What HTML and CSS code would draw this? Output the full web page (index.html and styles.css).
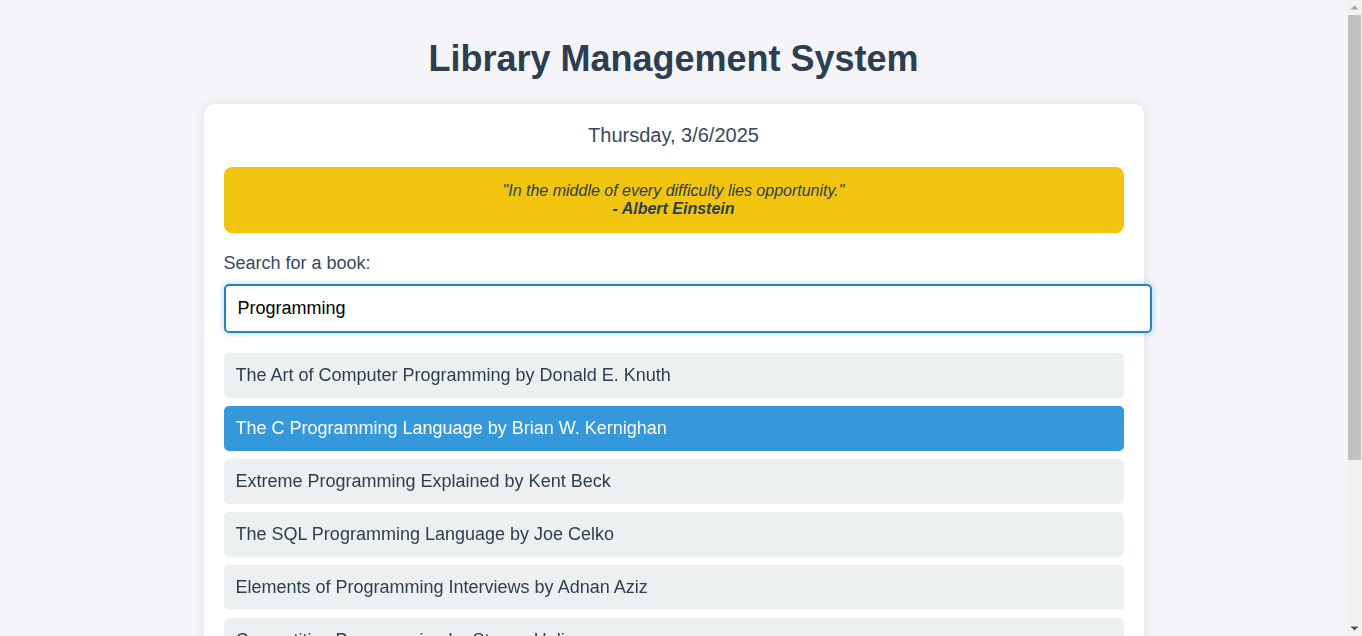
FILE: index.html
```html
<!DOCTYPE html>
<html lang="en">
<head>
<meta charset="utf-8">
<title>Library Management System</title>
<link rel="stylesheet" href="styles.css">
</head>
<body>
<div class="page">
  <h1 class="title">Library Management System</h1>
  <main class="card">
    <div class="date">Thursday, 3/6/2025</div>
    <div class="quote">
      <em>"In the middle of every difficulty lies opportunity."</em><br>
      <strong><em>- Albert Einstein</em></strong>
    </div>
    <label class="label" for="search">Search for a book:</label>
    <div class="search-wrap">
      <input class="search" id="search" type="text" value="Programming" autofocus>
    </div>
    <ul class="results">
      <li class="item">The Art of Computer Programming by Donald E. Knuth</li>
      <li class="item selected">The C Programming Language by Brian W. Kernighan</li>
      <li class="item">Extreme Programming Explained by Kent Beck</li>
      <li class="item">The SQL Programming Language by Joe Celko</li>
      <li class="item">Elements of Programming Interviews by Adnan Aziz</li>
      <li class="item">Competitive Programming by Steven Halim</li>
      <li class="item">Programming Pearls by Jon Bentley</li>
      <li class="item">Python Programming by John Zelle</li>
    </ul>
  </main>
</div>
<div class="scrollbar" aria-hidden="true">
  <div class="sb-btn">
    <svg width="15" height="15" viewBox="0 0 15 15"><polygon points="3.5,9.5 11.5,9.5 7.5,5.5" fill="#a3a3a3"/></svg>
  </div>
  <div class="sb-thumb"></div>
  <div class="sb-track"></div>
  <div class="sb-btn">
    <svg width="15" height="15" viewBox="0 0 15 15"><polygon points="3.5,5.5 11.5,5.5 7.5,9.5" fill="#505050"/></svg>
  </div>
</div>
<script src="script.js"></script>
</body>
</html>
```

FILE: styles.css
```css
html, body {
  margin: 0;
  padding: 0;
}
body {
  display: flex;
  align-items: flex-start;
  background: #f4f4f9;
  font-family: "Liberation Sans", Arial, sans-serif;
  color: #2c3e50;
}
.page {
  flex: 1;
  min-width: 0;
  padding: 14px 0 20px;
}
.scrollbar {
  flex: 0 0 15px;
  width: 15px;
  height: 636px;
  display: flex;
  flex-direction: column;
  background: #f1f1f1;
}
.sb-btn {
  height: 15px;
  flex: 0 0 15px;
}
.sb-btn svg {
  display: block;
}
.sb-thumb {
  height: 445px;
  flex: 0 0 445px;
  margin: 0 1px;
  background: #c1c1c1;
}
.sb-track {
  flex: 1;
}
.title {
  margin: 24px 0;
  text-align: center;
  font-size: 36px;
  font-weight: bold;
  color: #2c3e50;
  line-height: normal;
}
.card {
  display: block;
  width: 900px;
  margin: 0 auto;
  padding: 20px;
  background: #ffffff;
  border-radius: 10px;
  box-shadow: 0 0 10px rgba(0, 0, 0, 0.1);
}
.date {
  text-align: center;
  font-size: 20px;
  color: #34495e;
  margin-bottom: 20px;
}
.quote {
  background: #f1c40f;
  border-radius: 8px;
  padding: 15px;
  text-align: center;
  font-size: 16px;
  line-height: 18px;
  color: #2c3e50;
  margin-bottom: 20px;
}
.label {
  display: block;
  font-size: 18px;
  color: #34495e;
  margin-bottom: 10px;
}
.search-wrap {
  margin: 0 0 20px;
}
.search {
  display: block;
  width: 100%;
  box-sizing: content-box;
  padding: 12px;
  font-size: 18px;
  font-family: "Liberation Sans", Arial, sans-serif;
  color: #000;
  caret-color: #000;
  border: 2px solid #2a80c0;
  border-radius: 5px;
  box-shadow: 0 0 6px rgba(52, 152, 219, 0.45);
  outline: none;
  margin: 0;
}
.results {
  list-style: none;
  margin: 0;
  padding: 0;
}
.item {
  background: #ecf0f1;
  padding: 12px;
  margin-bottom: 8px;
  border-radius: 5px;
  font-size: 18px;
  line-height: 21px;
  color: #2c3e50;
}
.item.selected {
  background: #3498db;
  color: #ffffff;
}
```

FILE: script.js
```js
var s = document.getElementById('search');
s.focus();
s.setSelectionRange(s.value.length, s.value.length);
```
